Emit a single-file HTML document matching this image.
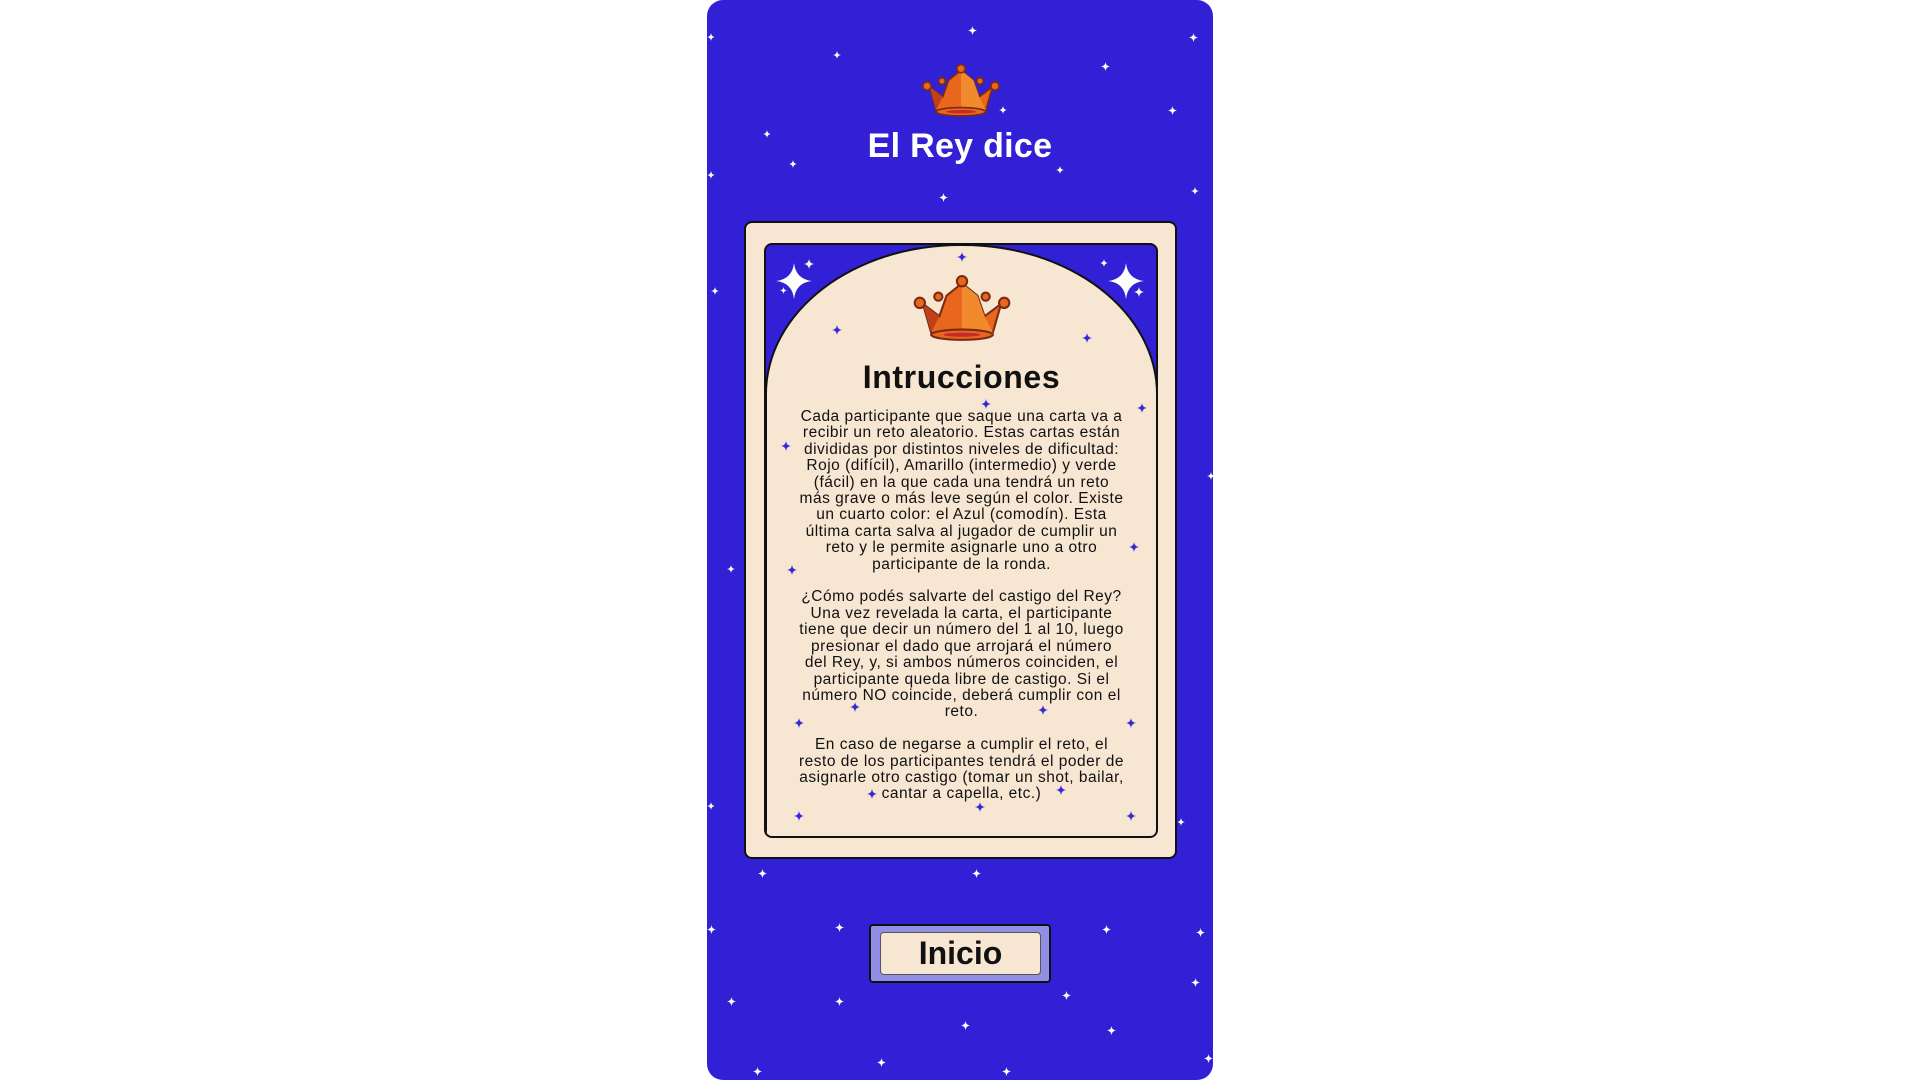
<!DOCTYPE html>
<html><head><meta charset="utf-8"><style>
body{margin:0;width:1920px;height:1080px;background:#fff;position:relative;overflow:hidden;font-family:"Liberation Sans",sans-serif}
#panel{position:absolute;left:707px;top:0;width:506px;height:1080px;background:#3120d6;border-radius:16px;overflow:hidden}
.t{position:absolute;left:0;width:100%;text-align:center}
#title{top:127px;font-size:34px;font-weight:bold;color:#fff;letter-spacing:.3px}
#card{position:absolute;left:37px;top:221px;width:429px;height:634px;background:#f6e6d2;border:2.5px solid #111;border-radius:8px}
#inner{position:absolute;left:18px;top:20px;width:390px;height:591px;background:#3120d6;border:2.5px solid #111;border-radius:8px;overflow:hidden}
#arch{position:absolute;left:-1px;top:-1px;width:389px;height:594px;background:#f6e6d2;border:2.5px solid #111;border-radius:195px 195px 0 0/150px 150px 0 0}
#h2{top:113px;font-size:32px;font-weight:bold;color:#111;letter-spacing:.6px}
#body{top:163px;font-size:15.5px;line-height:16.4px;color:#111;white-space:nowrap;letter-spacing:.5px}
#btn{position:absolute;left:162px;top:924px;width:178px;height:55px;background:#8f8fe6;border:2px solid #111;border-radius:4px}
#btnin{position:absolute;left:9px;top:6px;width:159px;height:41px;background:#f6e6d2;border:1.5px solid #555;border-radius:4px;text-align:center;font-size:32px;font-weight:bold;line-height:41px;color:#111}
svg.s{position:absolute}
</style></head><body>
<svg width="0" height="0" style="position:absolute"><defs>
<symbol id="sp" viewBox="-10 -10 20 20"><path d="M0-10Q1-1 10 0Q1 1 0 10Q-1 1-10 0Q-1-1 0-10Z"/></symbol>
<symbol id="cr" viewBox="0 0 100 70">
<g stroke="#7a2a10" stroke-width="2">
<path d="M12 30 L28 42 L35 22 L50 10 L65 22 L72 42 L88 30 L80 58 Q50 66 20 58 Z" fill="#e8661e"/>
<path d="M50 10 L65 22 L72 42 L80 58 Q65 62 50 62 Z" fill="#f08a2c" stroke="none"/>
<path d="M12 30 L28 42 L20 58Z" fill="#c0401a" stroke="none"/>
<ellipse cx="50" cy="60" rx="30" ry="5" fill="#e8661e"/>
<ellipse cx="50" cy="60" rx="18" ry="2" fill="#c42a2a" stroke="none"/>
<circle cx="50" cy="8" r="5" fill="#e8661e"/>
<circle cx="9" cy="29" r="5" fill="#e8661e"/>
<circle cx="91" cy="29" r="5" fill="#e8661e"/>
<circle cx="27" cy="23" r="4" fill="#e8661e"/>
<circle cx="73" cy="23" r="4" fill="#e8661e"/>
</g></symbol></defs></svg>
<div id="panel">
<svg class="s" style="left:212px;top:62px" width="84" height="58"><use href="#cr" width="84" height="58"/></svg>
<div class="t" id="title">El Rey dice</div>
<svg class="s" style="left:0;top:0" width="506" height="1080" fill="#fff">
<use href="#sp" x="261" y="26" width="9" height="9"/><use href="#sp" x="126" y="51" width="8" height="8"/>
<use href="#sp" x="394" y="62" width="9" height="9"/><use href="#sp" x="482" y="33" width="9" height="9"/>
<use href="#sp" x="0" y="33" width="8" height="8"/><use href="#sp" x="292" y="106" width="8" height="8"/>
<use href="#sp" x="461" y="106" width="9" height="9"/><use href="#sp" x="56" y="130" width="8" height="8"/>
<use href="#sp" x="82" y="160" width="8" height="8"/><use href="#sp" x="349" y="166" width="8" height="8"/>
<use href="#sp" x="0" y="171" width="8" height="8"/><use href="#sp" x="232" y="193" width="9" height="9"/>
<use href="#sp" x="484" y="187" width="8" height="8"/><use href="#sp" x="4" y="287" width="8" height="8"/>
<use href="#sp" x="20" y="565" width="8" height="8"/><use href="#sp" x="500" y="472" width="8" height="8"/>
<use href="#sp" x="0" y="802" width="8" height="8"/><use href="#sp" x="470" y="818" width="8" height="8"/>
<use href="#sp" x="51" y="869" width="9" height="9"/><use href="#sp" x="265" y="869" width="9" height="9"/>
<use href="#sp" x="0" y="925" width="9" height="9"/><use href="#sp" x="128" y="923" width="9" height="9"/>
<use href="#sp" x="395" y="925" width="9" height="9"/><use href="#sp" x="489" y="928" width="9" height="9"/>
<use href="#sp" x="20" y="997" width="9" height="9"/><use href="#sp" x="128" y="997" width="9" height="9"/>
<use href="#sp" x="355" y="991" width="9" height="9"/><use href="#sp" x="484" y="978" width="9" height="9"/>
<use href="#sp" x="254" y="1021" width="9" height="9"/><use href="#sp" x="400" y="1026" width="9" height="9"/>
<use href="#sp" x="170" y="1058" width="9" height="9"/><use href="#sp" x="46" y="1067" width="9" height="9"/>
<use href="#sp" x="295" y="1067" width="9" height="9"/><use href="#sp" x="497" y="1054" width="9" height="9"/>
</svg>
<div id="card"><div id="inner">
<svg class="s" style="left:8px;top:10px" width="50" height="50" fill="#fff"><use href="#sp" x="2" y="8" width="36" height="36"/><use href="#sp" x="30" y="4" width="10" height="10"/><use href="#sp" x="6" y="32" width="7" height="7"/></svg>
<svg class="s" style="left:332px;top:10px" width="50" height="50" fill="#fff"><use href="#sp" x="10" y="8" width="36" height="36"/><use href="#sp" x="2" y="4" width="8" height="8"/><use href="#sp" x="36" y="32" width="10" height="10"/></svg>
<div id="arch">
<svg class="s" style="left:140px;top:27px" width="110" height="72"><use href="#cr" width="110" height="72"/></svg>
<div class="t" id="h2">Intrucciones</div>
<div class="t" id="body">Cada participante que saque una carta va a<br>recibir un reto aleatorio. Estas cartas están<br>divididas por distintos niveles de dificultad:<br>Rojo (difícil), Amarillo (intermedio) y verde<br>(fácil) en la que cada una tendrá un reto<br>más grave o más leve según el color. Existe<br>un cuarto color: el Azul (comodín). Esta<br>última carta salva al jugador de cumplir un<br>reto y le permite asignarle uno a otro<br>participante de la ronda.<br><br>¿Cómo podés salvarte del castigo del Rey?<br>Una vez revelada la carta, el participante<br>tiene que decir un número del 1 al 10, luego<br>presionar el dado que arrojará el número<br>del Rey, y, si ambos números coinciden, el<br>participante queda libre de castigo. Si el<br>número NO coincide, deberá cumplir con el<br>reto.<br><br>En caso de negarse a cumplir el reto, el<br>resto de los participantes tendrá el poder de<br>asignarle otro castigo (tomar un shot, bailar,<br>cantar a capella, etc.)</div>
<svg class="s" style="left:0;top:0" width="390" height="594" fill="#3528d8">
<use href="#sp" x="190" y="6" width="10" height="10"/><use href="#sp" x="65" y="79" width="10" height="10"/>
<use href="#sp" x="315" y="87" width="10" height="10"/><use href="#sp" x="214" y="153" width="10" height="10"/>
<use href="#sp" x="370" y="157" width="10" height="10"/><use href="#sp" x="14" y="195" width="10" height="10"/>
<use href="#sp" x="362" y="296" width="10" height="10"/><use href="#sp" x="20" y="319" width="10" height="10"/>
<use href="#sp" x="83" y="456" width="10" height="10"/><use href="#sp" x="271" y="459" width="10" height="10"/>
<use href="#sp" x="27" y="472" width="10" height="10"/><use href="#sp" x="359" y="472" width="10" height="10"/>
<use href="#sp" x="100" y="543" width="10" height="10"/><use href="#sp" x="289" y="539" width="10" height="10"/>
<use href="#sp" x="208" y="556" width="10" height="10"/><use href="#sp" x="27" y="565" width="10" height="10"/>
<use href="#sp" x="359" y="565" width="10" height="10"/>
</svg>
</div>
</div></div>
<div id="btn"><div id="btnin">Inicio</div></div>
</div>
</body></html>
